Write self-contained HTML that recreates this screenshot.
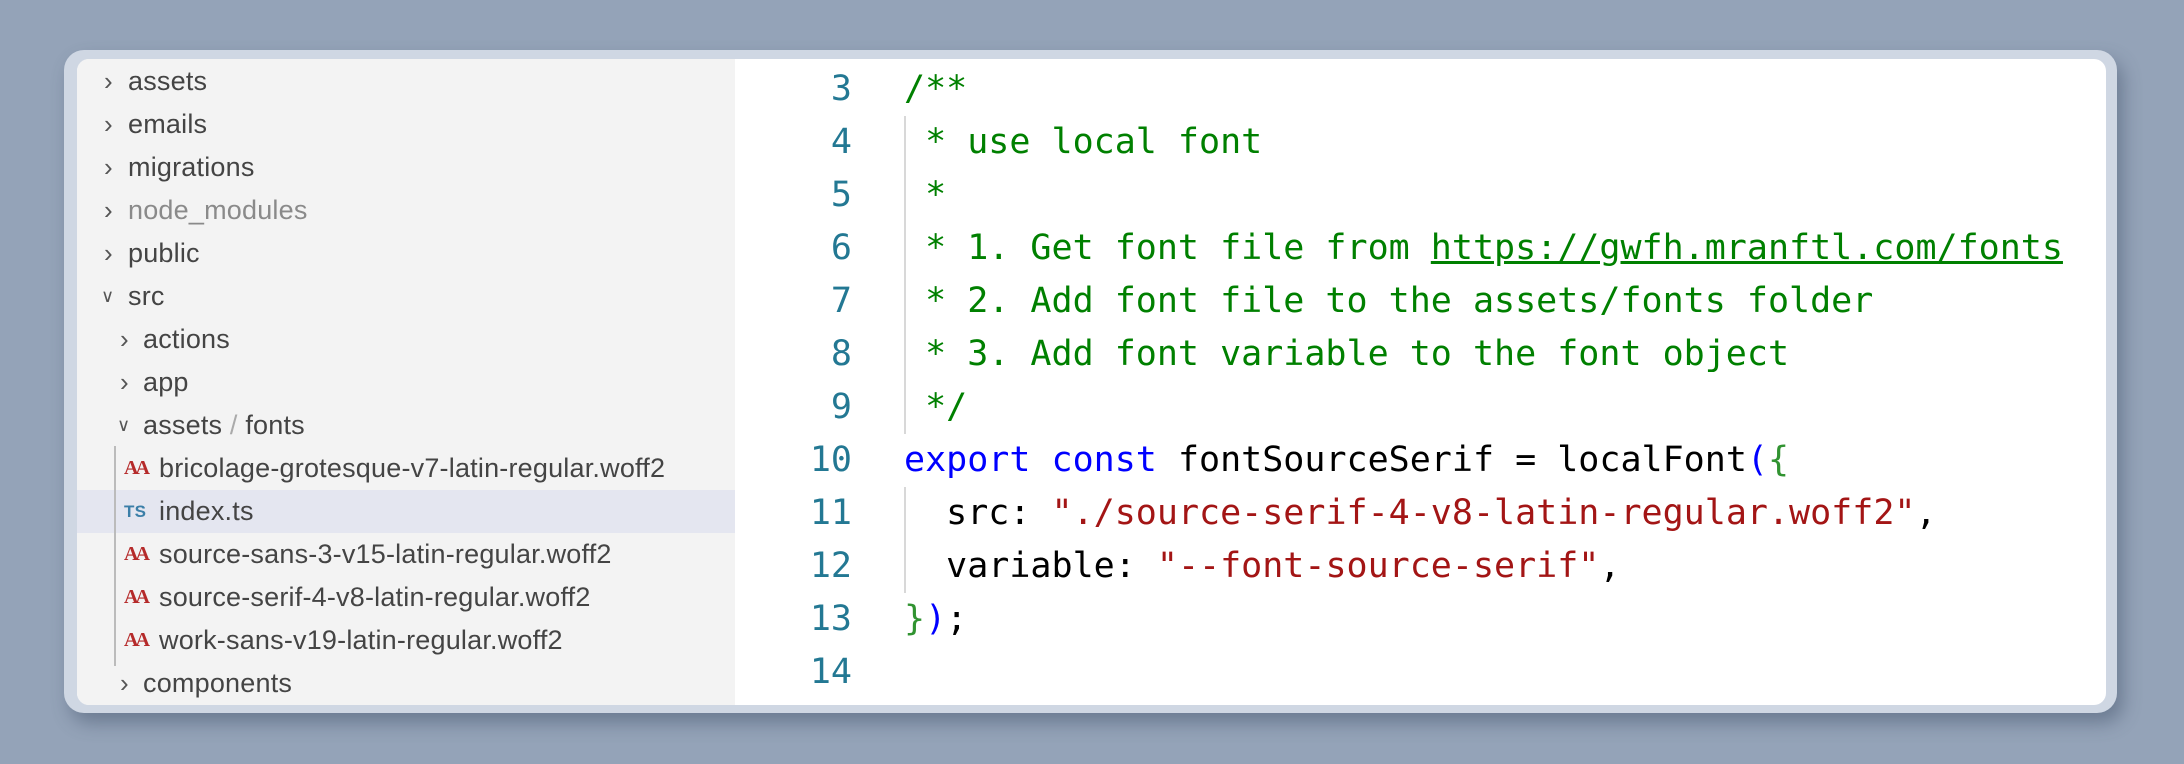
<!DOCTYPE html>
<html><head><meta charset="utf-8"><style>
*{margin:0;padding:0;box-sizing:border-box}
body{width:2184px;height:764px;background:#94a3b8;position:relative;overflow:hidden;font-family:"Liberation Sans",sans-serif}
.win{position:absolute;left:64px;top:50px;width:2053px;height:663px;background:#cfd7e3;border-radius:20px;box-shadow:6px 10px 18px rgba(60,75,100,.45)}
.inner{position:absolute;left:77px;top:59px;width:2029px;height:646px;background:#fff;border-radius:12px;overflow:hidden}
.side{position:absolute;left:0;top:0;width:658px;height:646px;background:#f3f3f3}
.row{position:absolute;left:0;width:658px;height:43px;line-height:43px;font-size:27px;color:#444;letter-spacing:0.2px}
.row.sel{background:#e4e6f0}
.row span{position:absolute;top:0}
.chev{font-size:26px;color:#555}
.ic{color:#b52a2a;font-family:"Liberation Serif",serif;font-size:20px;font-weight:bold;letter-spacing:-3px}
.ts{color:#3b7fa8;font-size:17px;font-weight:bold}
.guide{position:absolute;left:37px;top:387px;width:2px;height:220px;background:#bbb}
.code{position:absolute;left:0;top:0;font-family:"DejaVu Sans Mono","Liberation Mono",monospace;font-size:35px;}
.ln{position:absolute;width:775px;text-align:right;color:#237893;height:53px;line-height:53px}
.cl{position:absolute;left:827px;height:53px;line-height:53px;white-space:pre;color:#000}
.c{color:#008000}.k{color:#0000ff}.s{color:#a31515}.g{color:#319331}
.cg{position:absolute;left:827px;width:2px;background:#d8d8d8}
</style></head><body>
<div class="win"></div>
<div class="inner">
 <div class="side">
  <div class="row" style="top:1px"><span class="chev" style="left:27px">›</span><span style="left:51px">assets</span></div>
  <div class="row" style="top:44px"><span class="chev" style="left:27px">›</span><span style="left:51px">emails</span></div>
  <div class="row" style="top:87px"><span class="chev" style="left:27px">›</span><span style="left:51px">migrations</span></div>
  <div class="row" style="top:130px;color:#8a8a8a"><span class="chev" style="left:27px">›</span><span style="left:51px">node_modules</span></div>
  <div class="row" style="top:173px"><span class="chev" style="left:27px">›</span><span style="left:51px">public</span></div>
  <div class="row" style="top:216px"><span class="chev" style="left:24px;font-size:18px">∨</span><span style="left:51px">src</span></div>
  <div class="row" style="top:259px"><span class="chev" style="left:43px">›</span><span style="left:66px">actions</span></div>
  <div class="row" style="top:302px"><span class="chev" style="left:43px">›</span><span style="left:66px">app</span></div>
  <div class="row" style="top:345px"><span class="chev" style="left:40px;font-size:18px">∨</span><span style="left:66px">assets<span style="position:static;color:#aaa"> / </span>fonts</span></div>
  <div class="row" style="top:388px"><span class="ic" style="left:47px">AA</span><span style="left:82px">bricolage-grotesque-v7-latin-regular.woff2</span></div>
  <div class="row sel" style="top:431px"><span class="ts" style="left:47px">TS</span><span style="left:82px">index.ts</span></div>
  <div class="row" style="top:474px"><span class="ic" style="left:47px">AA</span><span style="left:82px">source-sans-3-v15-latin-regular.woff2</span></div>
  <div class="row" style="top:517px"><span class="ic" style="left:47px">AA</span><span style="left:82px">source-serif-4-v8-latin-regular.woff2</span></div>
  <div class="row" style="top:560px"><span class="ic" style="left:47px">AA</span><span style="left:82px">work-sans-v19-latin-regular.woff2</span></div>
  <div class="row" style="top:603px"><span class="chev" style="left:43px">›</span><span style="left:66px">components</span></div>
  <div class="guide"></div>
 </div>
 <div class="code">
  <div class="cg" style="top:57px;height:318px"></div>
  <div class="cg" style="top:428px;height:106px"></div>
  <div class="ln" style="top:4px">3</div><div class="cl c" style="top:4px">/**</div>
  <div class="ln" style="top:57px">4</div><div class="cl c" style="top:57px"> * use local font</div>
  <div class="ln" style="top:110px">5</div><div class="cl c" style="top:110px"> *</div>
  <div class="ln" style="top:163px">6</div><div class="cl c" style="top:163px"> * 1. Get font file from <u>https://gwfh.mranftl.com/fonts</u></div>
  <div class="ln" style="top:216px">7</div><div class="cl c" style="top:216px"> * 2. Add font file to the assets/fonts folder</div>
  <div class="ln" style="top:269px">8</div><div class="cl c" style="top:269px"> * 3. Add font variable to the font object</div>
  <div class="ln" style="top:322px">9</div><div class="cl c" style="top:322px"> */</div>
  <div class="ln" style="top:375px">10</div><div class="cl" style="top:375px"><span class="k">export</span> <span class="k">const</span> fontSourceSerif = localFont<span class="k">(</span><span class="g">{</span></div>
  <div class="ln" style="top:428px">11</div><div class="cl" style="top:428px">  src: <span class="s">"./source-serif-4-v8-latin-regular.woff2"</span>,</div>
  <div class="ln" style="top:481px">12</div><div class="cl" style="top:481px">  variable: <span class="s">"--font-source-serif"</span>,</div>
  <div class="ln" style="top:534px">13</div><div class="cl" style="top:534px"><span class="g">}</span><span class="k">)</span>;</div>
  <div class="ln" style="top:587px">14</div>
 </div>
</div>
</body></html>
